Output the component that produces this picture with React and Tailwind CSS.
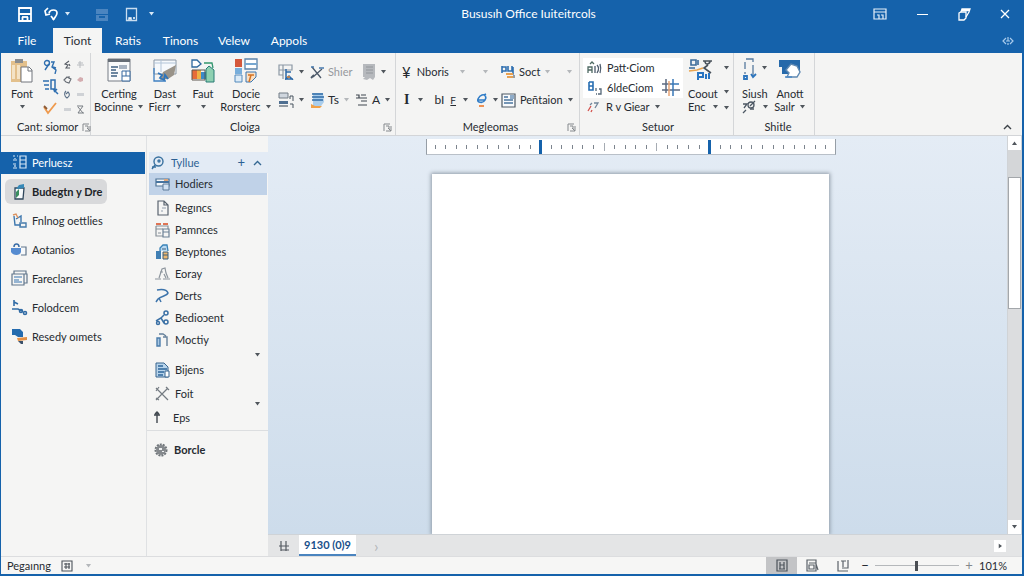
import { useState } from 'react';
import { clsx } from 'clsx';

const BLUE = '#2f6fb0';
const DARK = '#3f4650';

const shapes = {
  save: (
    <g fill="none" stroke="#fff" strokeWidth="1.8">
      <path d="M1 1h12v13H1z" />
      <path d="M1 7h12M4.500 14v-4M9.500 14v-4" />
      <path d="M4 10h6" />
    </g>
  ),
  undo: (
    <g fill="none" stroke="#fff" strokeWidth="1.7">
      <path d="M4 1 1 4l1 4 4-1" />
      <path d="M5 6c1-4 8-4 8 0 0 3-2 4-4 7" />
      <path d="m7 9 3 4" />
    </g>
  ),
  store: (
    <g>
      <path d="M1 2h12v5H1zM1 8h12v6H1z" fill="#4b85c0" />
      <path d="M4 9h6v2H4z" fill="#1763ab" />
    </g>
  ),
  tablet: (
    <g fill="none" stroke="#c9ddf0" strokeWidth="1.3">
      <path d="M1.500 1.500h10v12h-10z" />
      <path d="M4 13v-2h2v2M8 11h2" stroke="#fff" />
    </g>
  ),
  ribbonOptions: (
    <g fill="none" stroke="#e6f0fa" strokeWidth="1.2">
      <path d="M1 2h12v10H1zM1 5h12" />
      <path d="M4 8h2v4M8 8h2v4" />
    </g>
  ),
  restore: (
    <g fill="none" stroke="#fff" strokeWidth="1.3">
      <path d="M2 6l2-1h5v6l-2 2H2z" />
      <path d="M4 5l1-3h8l-1 3-3 5M5 3.500h7" />
    </g>
  ),
  share: <path d="m4 4-3 3 3 3m4-6 3 3-3 3M6 3v4M4 7h4M6 9v2" fill="none" stroke="#a9cbec" strokeWidth="1.2" />,
  paste: (
    <g>
      <path d="M1 3h16v21H1z" fill="#e3c08c" />
      <path d="M5 1h8v4H5z" fill="#8a8d90" />
      <path d="M2 7h3v14H2zM7 7h3v14H7z" fill="#f4e3c6" />
      <path d="M11 9h8l3 3v12H11z" fill="#fff" stroke="#70757c" />
      <path d="M18 9v4h4" fill="none" stroke="#70757c" />
    </g>
  ),
  brushA: (
    <g fill="none" stroke={BLUE} strokeWidth="1.4">
      <circle cx="4" cy="4" r="2.500" />
      <path d="M6 5 2 11M8 3h3l-2 5 4 3-1 4M10 8l3 1" />
    </g>
  ),
  listPen: (
    <g fill="none" stroke={BLUE} strokeWidth="1.5">
      <path d="M0 2h6M1 6h5M2 10h4" />
      <path d="M8 1h4v9H8zM10 10l5 5M11 13l3-3" />
    </g>
  ),
  check: (
    <g fill="none" strokeWidth="1.8">
      <path d="M1 6l4 6L13 2" stroke="#ef9a4d" />
      <path d="M1 5l3 3" stroke="#8a5a38" />
    </g>
  ),
  tinyA: <path d="M6 1 2 4l3 1-2 3h4M6 4l1 2" fill="none" stroke="#555b63" strokeWidth="1.100" />,
  tinyB: <path d="M1 5l3-3 4 2-2 4-3-1zM6 1v3" fill="none" stroke="#666c74" strokeWidth="1.100" />,
  tinyC: <path d="M3 1C1 3 1 6 4 8c3-2 3-4 1-6L3 4" fill="none" stroke="#5b7088" strokeWidth="1.100" />,
  tinyD: <path d="M1 3h7v3H1z" fill="#cfd2d6" />,
  tinyE: <path d="M4 1v7M1 5h7M2 3h5" fill="none" stroke="#b9bcc0" />,
  tinyF: <path d="M1 5l3-3 3 1v3l-3 1z" fill="#d4adb0" />,
  tinyG: <path d="M1 1h6L2 8h6M2 2l5 6" fill="none" stroke="#777c82" />,
  docTable: (
    <g>
      <path d="M1 1h22v22H1z" fill="#f9fafb" stroke="#777d85" />
      <path d="M1 1h22v3H1z" fill="#666d76" />
      <path d="M4 9h7M4 12h5M4 15h7M4 18h6" stroke="#3f6083" strokeWidth="1.600" />
      <path d="M12 7h8v4h-8z" fill="#a8b3c1" />
      <path d="M15 13h8v10h-8zM15 18h8M19 13v5" fill="#fff" stroke="#36689f" />
    </g>
  ),
  designDoc: (
    <g>
      <path d="M1 2h22v14H1z" fill="#f6f9fc" stroke="#8a97a5" />
      <path d="M1 5h22M8 2v12" stroke="#b3c5d8" />
      <path d="m10 14 13-7-2 10-6 4-8 1z" fill="#999389" />
      <path d="M1 10v13h12" fill="none" stroke="#3f80c2" strokeWidth="1.300" />
      <path d="M5 15l4 2-2 3 4 2 1-5 3 4" fill="none" stroke="#2e75bb" strokeWidth="1.800" />
    </g>
  ),
  palette: (
    <g>
      <path d="M1 2h5l4 4-4 3H1z" fill="#fff" stroke="#2d689e" strokeWidth="1.300" />
      <path d="M1 12h5v9H1z" fill="#e76b39" />
      <path d="M6 12h4v9H6z" fill="#efb144" />
      <path d="M10 14h5v7h-5z" fill="#3b8ac8" />
      <path d="M1 12h13v10H1z" fill="none" stroke="#5d5750" />
      <path d="M15 11l3-3 5 4v12h-8z" fill="#8ed0b1" stroke="#287b75" />
      <path d="M13 5h8l1 5" fill="none" stroke="#32966e" strokeWidth="1.300" />
    </g>
  ),
  blocks: (
    <g>
      <path d="M1 1h7v8H1z" fill="#d4583b" />
      <path d="M1 10h7v6H1z" fill="#78aedb" />
      <path d="M1 17h7v7H1z" fill="#dcebf7" stroke="#5289bc" />
      <path d="M11 1h12v10H11z" fill="#fff" stroke="#5b83aa" strokeWidth="1.300" />
      <path d="M11 6h12" stroke="#77a7d0" strokeWidth="2" />
      <path d="M12 14h10v5l-5 5h-5z" fill="#fbe0c3" stroke="#3977b4" />
      <path d="M14 17h6M17 17l-2 7" stroke="#d47325" strokeWidth="1.500" />
    </g>
  ),
  gridCursor: (
    <g fill="none">
      <path d="M1 1h13v5H1zM5 1v14M1 6v5h4" stroke="#8c98a5" strokeWidth="1.200" />
      <path d="M8 5v10l3-3 4 4M8 8h5M7 15h8" stroke="#2e6aa8" strokeWidth="1.500" />
      <path d="M9 13h3" stroke="#e38b3f" strokeWidth="1.500" />
    </g>
  ),
  tableRows: (
    <g>
      <path d="M1 1h9v5H1z" fill="#cfd6de" stroke="#737c86" />
      <path d="M1 9h9v3H1z" fill="#4f6f91" />
      <path d="M1 14h9" stroke="#737c86" strokeWidth="1.500" />
      <path d="M12 7V4h3v5M12 12h3v4" fill="none" stroke="#46525f" />
    </g>
  ),
  scissors: (
    <g fill="none" stroke="#4b5868" strokeWidth="1.300">
      <path d="M2 2l9 11M12 4 3 12" />
      <path d="M1 2h3M9 3h5" stroke="#477aae" />
      <path d="M1 13l3-3" strokeWidth="1.800" />
    </g>
  ),
  ribbonGrey: (
    <g>
      <path d="M1 1h12v13l-2 3-3-2-3 2-4-1 2-2H1z" fill="#b6b9bd" />
      <path d="M4 4h7M4 7h7M4 10h7" stroke="#92969b" />
    </g>
  ),
  stack: (
    <g>
      <path d="M3 1h10l1 9-3 4H3z" fill="#a9cdec" />
      <path d="M2 2h11M2 5h12M2 8h11" stroke="#2f6ba5" strokeWidth="1.500" />
      <path d="M1 12l4 2h7l-2 2H1z" fill="#f0a14a" />
    </g>
  ),
  indent: <path d="M1 2h3v3H1M4 5h8M6 8h6M3 12h9M6 2h5" fill="none" stroke={DARK} strokeWidth="1.200" />,
  sortBlocks: (
    <g>
      <path d="M1 2v7M1 3h4v4H1M7 2v5h4V2M12 3v7H6" fill="none" stroke={BLUE} strokeWidth="1.600" />
      <path d="M5 10h7M6 13h6" stroke="#e8a151" strokeWidth="2" />
      <path d="M13 11v3" stroke={DARK} />
    </g>
  ),
  swirl: (
    <g fill="none">
      <path d="M2 7h7c2-3 0-6-3-5S0 8 3 9c3 1 5 0 6-2M8 2l2-1" stroke="#2f7cc7" strokeWidth="1.600" />
      <path d="M3 13h5" stroke="#ef9254" strokeWidth="2" />
    </g>
  ),
  card: (
    <g>
      <path d="M1 1h13v13H1z" fill="#f8fafc" stroke="#4c5965" strokeWidth="1.200" />
      <path d="M3 4h4M3 7h9M3 10h9" stroke="#4a759f" strokeWidth="1.300" />
      <path d="M9 2h4v4H9z" fill="#8facc9" />
    </g>
  ),
  pattA: (
    <g fill="none" strokeWidth="1.300">
      <path d="M1 13V7h4v6M1 10h4M3 4l2-2 2 2" stroke="#4f6a63" />
      <path d="M8 6v7M10 5c2 2 2 5 0 8M13 4c1 3 1 6 0 9" stroke="#4d5b6c" />
    </g>
  ),
  pattB: (
    <g fill="none" stroke="#276eb2" strokeWidth="1.600">
      <path d="M2 2v8h4V6H2M2 2h4v4" />
      <path d="M9 8v3M12 9h2v5h-3M9 14h1" stroke="#556778" strokeWidth="1.300" />
    </g>
  ),
  pattC: (
    <g fill="none" strokeWidth="1.300">
      <path d="M1 11l3-5M4 12l1-2" stroke="#d4534e" />
      <path d="M7 3h4L8 8M3 5l2-2" stroke="#71869b" />
    </g>
  ),
  hash: (
    <g fill="none" strokeWidth="1.500">
      <path d="M5 1v14M1 6h9M1 12h18" stroke="#5c6a80" />
      <path d="M12 1v17M10 6h8" stroke="#3978b8" />
      <path d="M8 3v15" stroke="#e8a574" />
    </g>
  ),
  connect: (
    <g fill="none" strokeWidth="1.600">
      <path d="M3 2h5v5H3zM1 10h6M10 2v5" stroke="#3d6c9a" />
      <path d="M15 3h9M17 3c0 5 5 3 5 0M20 7l-4 3 7 5" stroke="#48515b" />
      <path d="M1 13l8-1 6-2" stroke="#e8a450" />
      <path d="M10 22v-7h5v4h-4M18 16v5M21 15v6" stroke="#2874c2" strokeWidth="2" />
    </g>
  ),
  steps: (
    <g fill="none" strokeWidth="1.300">
      <path d="M4 1h7v3M11 7v10M3 4v7M3 14v2" stroke="#577a9e" />
      <path d="M9 16l2 3 3-3M2 18h3v3H2z" stroke="#2d75bd" strokeWidth="1.800" />
    </g>
  ),
  link: (
    <g fill="none" stroke="#4d5864" strokeWidth="1.300">
      <path d="M1 5h4l-3 4M4 11l-3 3M8 7l5-5M8 10h4" />
      <circle cx="9" cy="6" r="3" />
    </g>
  ),
  monitor: (
    <g>
      <path d="M1 2h21v10l-4 4H4V9H1z" fill="#2669aa" />
      <path d="m8 12 5-6 6 2 3 6-3 5H9l2-4z" fill="#fff" stroke="#5f89b2" strokeWidth="1.400" />
      <path d="M7 19h7" stroke="#4c89c4" strokeWidth="1.500" />
    </g>
  ),
  launcher: <path d="M1 8V1h6M3 3h3v3M3 8h5V3M5 5l3 3" fill="none" stroke="#85898d" />,
  navGrid: (
    <g fill="none" stroke="#d6e6f5" strokeWidth="1.200">
      <path d="M2 2h2M6 2h1M2 6h4M2 10h3M2 14h4M4 4v1M4 11v2" />
      <path d="M9 2h6v12H9zM9 6h6M9 10h6" />
    </g>
  ),
  jar: (
    <g>
      <path d="M4 5h9l-1 11H4z" fill="#f7fafc" stroke="#31485d" strokeWidth="1.300" />
      <path d="m5 6 3-4 5-1v4z" fill="#3688b7" />
      <path d="M5 15V9l3-3v6z" fill="#3a8e60" />
    </g>
  ),
  flow: (
    <g fill="none" strokeWidth="1.400">
      <path d="M3 4l1 9h6M5 7l5-3v6" stroke="#3d77ae" />
      <path d="M2 3l3-1 2 4" stroke="#dc9360" />
      <path d="M9 11h6v4H9z" stroke="#467bab" />
    </g>
  ),
  cloud: (
    <g>
      <path d="M0 7h10v4c-1 4-8 4-10 0z" fill="#558bd0" />
      <path d="M3 6c0-4 5-4 5 0" fill="none" stroke="#396ca7" strokeWidth="1.500" />
      <path d="M10 6h5v8h-5" fill="#f7f9fb" stroke="#61768b" strokeWidth="1.200" />
    </g>
  ),
  pages: (
    <g fill="none" stroke="#61768b" strokeWidth="1.200">
      <path d="M3 4V1h12v3M1 4h12v11H1zM13 4h3v9h-3" />
      <path d="M3 7h8M3 10h5M3 12h8" stroke="#3774b0" />
    </g>
  ),
  nodes: (
    <g fill="none" stroke="#326ca5" strokeWidth="1.600">
      <path d="M3 1v6M3 3l4 2M1 10h6l4 2" />
      <circle cx="10" cy="12" r="1.500" />
      <circle cx="14" cy="14" r="1.500" />
    </g>
  ),
  flag: (
    <g>
      <path d="M1 1h8l3 3v5H7L4 7H1z" fill="#246bae" />
      <path d="M6 10l10-1v3l-9 1z" fill="#e59044" />
      <path d="M7 13l3 3h2v-3" fill="#3b516a" />
    </g>
  ),
  search: (
    <g fill="none" stroke="#39719f" strokeWidth="1.400">
      <circle cx="7.500" cy="5.500" r="4.500" />
      <circle cx="8" cy="5" r="1" />
      <path d="M4 9l-3 4M1 11h4" />
    </g>
  ),
  screen: (
    <g>
      <path d="M1 3h13v7H1z" fill="#f5f8fb" stroke="#4c7296" strokeWidth="1.200" />
      <path d="M1 6h13" stroke="#47749f" strokeWidth="2" />
      <path d="M8 8h6v6H8z" fill="#d2e2f2" stroke="#5d7b99" />
      <path d="M9 3h4v2H9z" fill="#dfa679" />
    </g>
  ),
  page: (
    <g fill="none" stroke="#59636e" strokeWidth="1.200">
      <path d="M3 1h6l4 4v10H3zM9 1v4h4" />
      <path d="M7 8h4M6 11h2" stroke="#94a0ad" />
    </g>
  ),
  calendar: (
    <g fill="none" strokeWidth="1.200">
      <path d="M1 4h12v3M1 4v10h7M1 7h7M3 11h3" stroke="#879098" />
      <path d="M1 2h5M8 2h5" stroke="#df7454" strokeWidth="2" />
      <path d="M8 7h6v8H8zM8 10h6" stroke="#6d8196" />
    </g>
  ),
  building: (
    <g>
      <path d="M5 7V4l3-3h4l1 6" fill="#b9d9f2" stroke="#3781b7" strokeWidth="1.300" />
      <path d="M1 7h5v8H1z" fill="#407fb4" />
      <path d="M8 8h5v7H8z" fill="#edb66e" stroke="#3a5e7c" />
      <path d="M8 11h5M7 5h4" stroke="#3a5e7c" />
    </g>
  ),
  lamp: <path d="M0 13h6M8 13h7M4 12l3-9 3-1 1 5 2 5M5 6h3M9 8l2 4" fill="none" stroke="#8d959d" strokeWidth="1.200" />,
  curve: <path d="M2 2c6-1 10 0 11 3-1 3-7 3-10 6l-2 3M4 10l2 4" fill="none" stroke="#3d74ab" strokeWidth="1.500" />,
  tools: (
    <g fill="none" stroke="#3a70a5" strokeWidth="1.500">
      <circle cx="11" cy="3" r="2" />
      <path d="M9 5 6 8l-5 3M6 8l3 5" />
      <circle cx="11" cy="12" r="2" />
      <circle cx="3" cy="13" r="1.500" />
    </g>
  ),
  columns: (
    <g fill="none" strokeWidth="1.400">
      <path d="M2 6h3v8H2z" fill="#a9c8e4" stroke="#4c7dab" />
      <path d="M8 5h4v9M4 2h4l3 2" stroke="#65809a" />
    </g>
  ),
  report: (
    <g>
      <path d="M1 1h8l4 4v10H1z" fill="#b8d4eb" stroke="#39658e" />
      <path d="M3 4h5M3 7h9M3 10h6M3 13h5" stroke="#2e659a" strokeWidth="1.400" />
      <path d="M10 9h4v6h-4z" fill="#fff" stroke="#39658e" />
    </g>
  ),
  cross: <path d="M1 2l12 12M13 2 1 14M1 5l3-4M11 1l3 3M1 12l3 2" fill="none" stroke="#747b82" strokeWidth="1.200" />,
  arrowUp: <path d="M4 13V2M1 5h6M2 4l2-2 2 2" fill="none" stroke="#40474e" strokeWidth="1.400" />,
  gear: (
    <g>
      <circle cx="7" cy="8" r="5.500" fill="none" stroke="#6e7479" strokeWidth="2" strokeDasharray="2 1" />
      <circle cx="7" cy="8" r="5" fill="#85898d" />
      <path d="M5 6h3v2H5zM8 9h2v1H8z" fill="#eef0f1" />
    </g>
  ),
  sheets: <path d="M3 1v10M8 1v10M1 6h10M3 10h8" fill="none" stroke="#555b62" strokeWidth="1.200" />,
  layout: <path d="M1 1h10v10H1zM3 4h6M3 7h6M5 3v6M8 3v6" fill="none" stroke="#4c535a" strokeWidth="1.100" />,
  print: <path d="M1 1h10v11H1zM4 3v7M8 3v7M4 6h4M3 10h6" fill="none" stroke="#4c535a" strokeWidth="1.200" />,
  web: <path d="M1 1h9v11H1zM3 4h7M3 6h5v4H3zM10 5l2 6" fill="none" stroke="#5b6269" strokeWidth="1.200" />,
  read: <path d="M1 2v10h10M11 1v8H5M4 2h5M6 2v6" fill="none" stroke="#5b6269" strokeWidth="1.200" />,
};

function Icon({ name, w = 16, h = 16 }) {
  return (
    <svg width={w} height={h} viewBox={`0 0 ${w} ${h}`} className="shrink-0" aria-hidden="true">
      {shapes[name]}
    </svg>
  );
}

function Caret({ light, faint }) {
  return (
    <svg width="7" height="4" viewBox="0 0 7 4" className="shrink-0" aria-hidden="true">
      <path d="M1 0h5L3.500 3.500z" fill={light ? '#d8e8f6' : faint ? '#b4b7ba' : '#50565c'} />
    </svg>
  );
}

function Chevron({ color = '#3c4248' }) {
  return (
    <svg width="9" height="6" viewBox="0 0 9 6" className="shrink-0" aria-hidden="true">
      <path d="M1 5l3.500-3.500L8 5" fill="none" stroke={color} strokeWidth="1.400" />
    </svg>
  );
}

function Group({ label, launcher, className, children }) {
  return (
    <section className={clsx('flex shrink-0 flex-col border-r border-[#d4d6d8]', className)}>
      <div className="flex h-[66px]">{children}</div>
      <div className="grid h-4 grid-cols-[16px_1fr_16px] items-center">
        <span className="col-start-2 text-center whitespace-nowrap">{label}</span>
        {launcher && (
          <button type="button" aria-label={`${label} options`} className="flex justify-center">
            <Icon name="launcher" w={9} h={9} />
          </button>
        )}
      </div>
    </section>
  );
}

function BigButton({ icon, w = 24, lines, className }) {
  return (
    <button type="button" className={clsx('flex shrink-0 flex-col items-center pt-[5px] leading-[13px]', className)}>
      <Icon name={icon} w={w} h={25} />
      <span className="mt-1 whitespace-nowrap">{lines[0]}</span>
      <span className="flex h-[13px] items-center gap-1 whitespace-nowrap">
        {lines[1]}
        <Caret />
      </span>
    </button>
  );
}

function Tool({ icon, w = 16, h = 16, label, caret, faint, height = 'h-[22px]', className }) {
  return (
    <button
      type="button"
      aria-label={label ? undefined : icon || 'More'}
      className={clsx('flex shrink-0 items-center gap-1 whitespace-nowrap', height, className)}
    >
      {icon && <Icon name={icon} w={w} h={h} />}
      {label && <span>{label}</span>}
      {caret && <Caret faint={faint} />}
    </button>
  );
}

const tabs = [
  { label: 'File', width: 'w-[52px]' },
  { label: 'Tiont', width: 'w-[49px]' },
  { label: 'Ratis', width: 'w-[52px]' },
  { label: 'Tinons', width: 'w-[53px]' },
  { label: 'Velew', width: 'w-[54px]' },
  { label: 'Appols', width: 'w-[56px]' },
];

const navItems = [
  { icon: 'navGrid', label: 'Perluesz' },
  { icon: 'jar', label: 'Budegtn y Dre' },
  { icon: 'flow', label: 'Fnlnog oettlies' },
  { icon: 'cloud', label: 'Aotanios' },
  { icon: 'pages', label: 'Fareclarıes' },
  { icon: 'nodes', label: 'Folodcem' },
  { icon: 'flag', label: 'Resedy oımets' },
];

const outlineItems = [
  { icon: 'page', label: 'Regıncs' },
  { icon: 'calendar', label: 'Pamnces' },
  { icon: 'building', label: 'Beyptones' },
  { icon: 'lamp', label: 'Eoray' },
  { icon: 'curve', label: 'Derts' },
  { icon: 'tools', label: 'Bedioɔent' },
  { icon: 'columns', label: 'Moctiy' },
];

const tinyTools = ['tinyA', 'tinyE', 'tinyB', 'tinyF', 'tinyC', 'tinyD', 'tinyD', 'tinyG'];

function TitleBar() {
  return (
    <header className="flex h-7 shrink-0 items-center text-white">
      <div className="flex flex-1 items-center pl-[17px]">
        <button type="button" aria-label="Save" className="mr-3"><Icon name="save" w={14} h={15} /></button>
        <button type="button" aria-label="Undo" className="mr-1.5"><Icon name="undo" w={14} h={14} /></button>
        <button type="button" aria-label="Undo list" className="mr-6"><Caret light /></button>
        <button type="button" aria-label="Store" className="mr-4"><Icon name="store" w={14} h={15} /></button>
        <button type="button" aria-label="Tablet" className="mr-2.5"><Icon name="tablet" w={13} h={15} /></button>
        <button type="button" aria-label="Customize"><Caret light /></button>
      </div>
      <h1 className="ml-7 text-center text-[12px] whitespace-nowrap">Bususıh Office Iuiteitrcols</h1>
      <div className="flex flex-1 items-center justify-end gap-7 pr-[11px]">
        <button type="button" aria-label="Ribbon display"><Icon name="ribbonOptions" w={14} h={14} /></button>
        <button type="button" aria-label="Minimize" className="flex h-3.5 w-3.5 items-center justify-center">
          <span className="h-px w-[11px] bg-white" />
        </button>
        <button type="button" aria-label="Restore"><Icon name="restore" w={14} h={14} /></button>
        <button type="button" aria-label="Close">
          <svg width="12" height="12" viewBox="0 0 12 12" aria-hidden="true">
            <path d="M2 2l8 8M10 2l-8 8" stroke="#fff" strokeWidth="1.300" />
          </svg>
        </button>
      </div>
    </header>
  );
}

function TabStrip() {
  const [active, setActive] = useState('Tiont');
  return (
    <nav className="flex h-[25px] shrink-0 items-stretch text-[12px]">
      {tabs.map((t) => (
        <button
          key={t.label}
          type="button"
          onClick={() => setActive(t.label)}
          className={clsx(t.width, t.label === active ? 'bg-[#f5f5f4] text-[#2b3037]' : 'text-white')}
        >
          {t.label}
        </button>
      ))}
      <button type="button" aria-label="Share" className="mr-2 ml-auto"><Icon name="share" w={12} h={14} /></button>
    </nav>
  );
}

function Ribbon() {
  return (
    <div className="flex h-[83px] shrink-0 border-b border-[#d3d5d8] bg-[#f4f4f3]">
      <Group label="Cant: siomor" launcher className="w-[90px]">
        <BigButton icon="paste" lines={['Font', '']} className="w-[42px]" />
        <div className="flex w-4 flex-col justify-between pt-[5px] pb-[3px]">
          <Tool icon="brushA" h={15} height="h-4" />
          <Tool icon="listPen" height="h-4" />
          <Tool icon="check" h={14} height="h-4" />
        </div>
        <div className="ml-1 grid grid-cols-2 content-start gap-x-1 pt-1">
          {tinyTools.map((name, i) => (
            <Tool key={i} icon={name} w={9} h={9} height="h-[15px]" />
          ))}
        </div>
      </Group>

      <Group label="Cloiga" launcher className="w-[305px] pl-1">
        <BigButton icon="docTable" lines={['Certing', 'Bocinne']} className="w-12" />
        <BigButton icon="designDoc" lines={['Dast', 'Fiєrr']} className="w-11" />
        <BigButton icon="palette" lines={['Faut', '']} className="w-8" />
        <BigButton icon="blocks" lines={['Docie', 'Rorsterc']} className="w-[54px]" />
        <div className="flex flex-col gap-1.5 pt-2 pl-[5px]">
          <div className="flex">
            <Tool icon="gridCursor" caret className="w-8" />
            <Tool icon="scissors" w={14} h={15} label="Shier" className="w-[52px] text-[#96999d]" />
            <Tool icon="ribbonGrey" w={14} h={18} caret />
          </div>
          <div className="flex">
            <Tool icon="tableRows" h={17} caret className="w-8" />
            <Tool icon="stack" w={14} label="Ts" caret faint className="w-[45px] text-[12px]" />
            <Tool icon="indent" w={13} h={14} label="A" caret className="text-[12px]" />
          </div>
        </div>
      </Group>

      <Group label="Megleomas" launcher className="w-[184px] pl-1.5">
        <div className="flex w-[99px] flex-col gap-1.5 pt-2">
          <div className="flex gap-4">
            <button type="button" className="flex h-[22px] w-16 items-center gap-1.5">
              <span className="text-[15px]">¥</span>
              <span>Nboris</span>
              <span className="ml-auto"><Caret faint /></span>
            </button>
            <Tool caret faint />
          </div>
          <div className="flex gap-2">
            <button type="button" className="flex h-[22px] items-center gap-2 pl-0.5 font-['Liberation_Serif',serif] text-[14px] font-bold">
              I <Caret />
            </button>
            <button type="button" className="flex h-[22px] w-9 items-center gap-1.5 pl-0.5 text-[12px]">
              bI <span className="text-[10px] underline">F</span> <Caret />
            </button>
            <Tool icon="swirl" w={12} h={15} caret />
          </div>
        </div>
        <div className="flex flex-col gap-1.5 pt-2">
          <div className="flex w-[72px] justify-between">
            <Tool icon="sortBlocks" w={14} label="Soct" caret faint />
            <Tool caret faint />
          </div>
          <Tool icon="card" w={15} h={15} label="Peñtaion" caret className="w-[72px]" />
        </div>
      </Group>

      <Group label="Setuor" className="w-[154px] pl-[3px]">
        <div className="flex w-[100px] flex-col pt-[5px]">
          <div className="flex h-10 justify-between bg-white pr-0.5 pl-1">
            <div className="flex flex-col">
              <Tool icon="pattA" label="Patt·Ciom" height="h-5" />
              <Tool icon="pattB" label="6ldeCiom" height="h-5" />
            </div>
            <button type="button" aria-label="Grid" className="flex items-end"><Icon name="hash" w={20} h={20} /></button>
          </div>
          <Tool icon="pattC" w={15} h={14} label="R v Giear" caret height="h-[18px]" className="pl-1" />
        </div>
        <div className="flex pt-[5px] pl-[5px] leading-[13px]">
          <button type="button" className="flex flex-col items-start">
            <Icon name="connect" w={25} h={25} />
            <span className="mt-1">Coout</span>
            <span className="flex items-center gap-1.5">Enc <Caret /></span>
          </button>
          <div className="ml-1 flex flex-col gap-[20px] pt-[8px]">
            <Caret />
            <Caret />
            <span className="-mt-2"><Caret /></span>
          </div>
        </div>
      </Group>

      <Group label="Shitle" className="w-[81px] pl-2">
        <button type="button" className="flex w-8 flex-col items-start pt-[5px] leading-[13px]">
          <span className="flex gap-1">
            <Icon name="steps" w={15} h={25} />
            <span className="pt-2"><Caret /></span>
          </span>
          <span className="mt-1">Siush</span>
          <span className="flex h-[13px] items-center gap-1.5"><Icon name="link" w={14} h={15} /> <Caret /></span>
        </button>
        <BigButton icon="monitor" lines={['Anott', 'Saılr']} className="w-8" />
      </Group>

      <button type="button" aria-label="Collapse ribbon" className="mr-2.5 mb-[5px] ml-auto self-end"><Chevron /></button>
    </div>
  );
}

function NavPane() {
  return (
    <aside className="w-[146px] shrink-0 border-r border-[#dfe1e3] bg-[#f5f5f4] pt-3">
      <ul>
        {navItems.map((item, i) => (
          <li key={item.label} className="flex h-[29px] items-center">
            <button
              type="button"
              className={clsx(
                'flex items-center gap-1 whitespace-nowrap',
                i === 0 && 'mr-px h-[22px] w-full bg-[#1562ab] pl-2.5 text-white',
                i === 1 && 'ml-1 h-[25px] w-[102px] rounded-md bg-[#d8d9db] pl-1.5 font-bold text-[#202428]',
                i > 1 && 'pl-2.5'
              )}
            >
              <Icon name={item.icon} w={17} h={17} />
              {item.label}
            </button>
          </li>
        ))}
      </ul>
    </aside>
  );
}

function OutlineItem({ icon, label, className, children }) {
  return (
    <li className={clsx('flex pr-[7px]', className)}>
      <button type="button" className="flex items-center gap-1 whitespace-nowrap">
        <Icon name={icon} />
        {label}
      </button>
      {children}
    </li>
  );
}

function OutlinePane() {
  return (
    <aside className="w-[121px] shrink-0 bg-[#f5f5f4] pt-4">
      <div className="ml-0.5 flex h-[21px] items-center bg-[#e3ebf5] pr-1.5 pl-0.5 text-[#2c6093]">
        <Icon name="search" w={14} h={14} />
        <span className="ml-1.5">Tyllue</span>
        <button type="button" aria-label="Add" className="ml-auto text-[13px] leading-none">+</button>
        <button type="button" aria-label="Collapse" className="ml-2"><Chevron color="#356892" /></button>
      </div>
      <ul>
        <OutlineItem icon="screen" label="Hodiers" className="mr-px ml-0.5 h-[22px] bg-[#c0d2e8] pl-1.5" />
      </ul>
      <ul className="pt-[2px]">
        {outlineItems.map((item) => (
          <OutlineItem key={item.label} icon={item.icon} label={item.label} className="h-[22px] pl-2" />
        ))}
      </ul>
      <div className="flex h-[7px] items-center justify-end pr-[7px]"><Caret /></div>
      <ul className="border-b border-[#dcdee0]">
        <OutlineItem icon="report" label="Bijens" className="h-6 pl-2" />
        <OutlineItem icon="cross" label="Foit" className="h-6 pl-2">
          <span className="ml-auto flex items-end"><Caret /></span>
        </OutlineItem>
        <OutlineItem icon="arrowUp" label="Eps" className="h-6 pl-1.5" />
      </ul>
      <ul>
        <OutlineItem icon="gear" label="Borcle" className="h-[38px] pl-[7px] font-bold" />
      </ul>
    </aside>
  );
}

function Ruler() {
  return (
    <div className="flex h-4 w-[410px] shrink-0 items-center justify-between border-x border-b border-x-[#969ea6] border-b-[#b9c0c8] bg-white px-[7px]">
      {Array.from({ length: 38 }, (_, i) => {
        const marker = i === 10 || i === 26;
        return (
          <span key={i} className="flex h-full w-[3px] items-center justify-center">
            <span
              className={clsx(
                marker && 'h-[14px] w-[3px] bg-[#1562ab]',
                !marker && (i === 16 || i === 21 ? 'h-2 w-px bg-[#a6acb3]' : 'h-1 w-px bg-[#7d858e]')
              )}
            />
          </span>
        );
      })}
    </div>
  );
}

function Workspace() {
  return (
    <main className="flex min-w-0 flex-1 flex-col">
      <div className="flex min-h-0 flex-1">
        <div className="flex min-w-0 flex-1 flex-col items-center overflow-hidden bg-linear-to-b from-[#e4ecf5] to-[#cddceb] pt-[3px] pr-3.5">
          <Ruler />
          <article className="mt-[19px] w-[397px] flex-1 bg-white shadow-[0_0_4px_1px_#8f9aa6]" />
        </div>
        <div className="flex w-[15px] shrink-0 flex-col border-x border-[#d0d3d6] bg-[#d4d6d8]">
          <button type="button" aria-label="Scroll up" className="flex h-[14px] rotate-180 items-center justify-center bg-white"><Caret /></button>
          <div className="mt-[27px] h-[132px] border border-[#a3a7ab] bg-white" />
          <div className="flex-1 bg-[#dcdddf]" />
          <button type="button" aria-label="Scroll down" className="flex h-[14px] items-center justify-center bg-white"><Caret /></button>
        </div>
      </div>
      <div className="flex h-[22px] shrink-0 items-stretch border-t border-[#cfd3d7] bg-[#e4e5e6]">
        <button type="button" aria-label="All sheets" className="flex w-[31px] items-center justify-center"><Icon name="sheets" w={12} h={12} /></button>
        <button type="button" className="w-[57px] border-b-2 border-[#4a84bf] bg-white font-bold text-[#174f8a]">9130 (0)9</button>
        <button type="button" aria-label="Next sheet" className="ml-[18px] text-[16px] text-[#b3b6b9]">›</button>
        <button type="button" aria-label="Scroll right" className="mr-4 ml-auto flex h-3 w-3 items-center justify-center self-center bg-white">
          <span className="-rotate-90"><Caret /></span>
        </button>
      </div>
    </main>
  );
}

function StatusBar() {
  const [zoom, setZoom] = useState(49);
  return (
    <footer className="flex h-[18px] shrink-0 items-center border-t border-[#dcdddf] bg-[#f6f6f5]">
      <span className="ml-1.5">Pegaınng</span>
      <button type="button" aria-label="Layout" className="ml-2.5"><Icon name="layout" w={12} h={12} /></button>
      <button type="button" aria-label="More status" className="ml-3"><Caret faint /></button>
      <div className="ml-auto flex h-full items-center">
        <button type="button" aria-label="Print view" className="flex h-full w-[31px] items-center justify-center bg-[#c3c4c6]"><Icon name="print" w={12} h={13} /></button>
        <button type="button" aria-label="Web view" className="flex w-[31px] justify-center"><Icon name="web" w={13} h={13} /></button>
        <button type="button" aria-label="Read view" className="flex w-[29px] justify-center"><Icon name="read" w={12} h={13} /></button>
        <button type="button" aria-label="Zoom out" className="ml-0.5 w-3 text-[13px] leading-none">−</button>
        <input
          type="range"
          aria-label="Zoom"
          value={zoom}
          onChange={(e) => setZoom(Number(e.target.value))}
          className="mx-1 h-px w-[84px] appearance-none bg-[#b5b8bb] [&::-webkit-slider-thumb]:h-2.5 [&::-webkit-slider-thumb]:w-[3px] [&::-webkit-slider-thumb]:appearance-none [&::-webkit-slider-thumb]:bg-[#4a4e53]"
        />
        <button type="button" aria-label="Zoom in" className="w-3 text-[13px] leading-none text-[#85898d]">+</button>
        <output className="mr-[15px] ml-1">101%</output>
      </div>
    </footer>
  );
}

export default function App() {
  return (
    <div className="flex h-screen flex-col overflow-hidden border-r-2 border-b-2 border-l border-[#1562ab] bg-[#1562ab] font-['Lato','Open_Sans',sans-serif] text-[11px] leading-[14px] text-[#262b31]">
      <TitleBar />
      <TabStrip />
      <Ribbon />
      <div className="flex min-h-0 flex-1">
        <NavPane />
        <OutlinePane />
        <Workspace />
      </div>
      <StatusBar />
    </div>
  );
}
